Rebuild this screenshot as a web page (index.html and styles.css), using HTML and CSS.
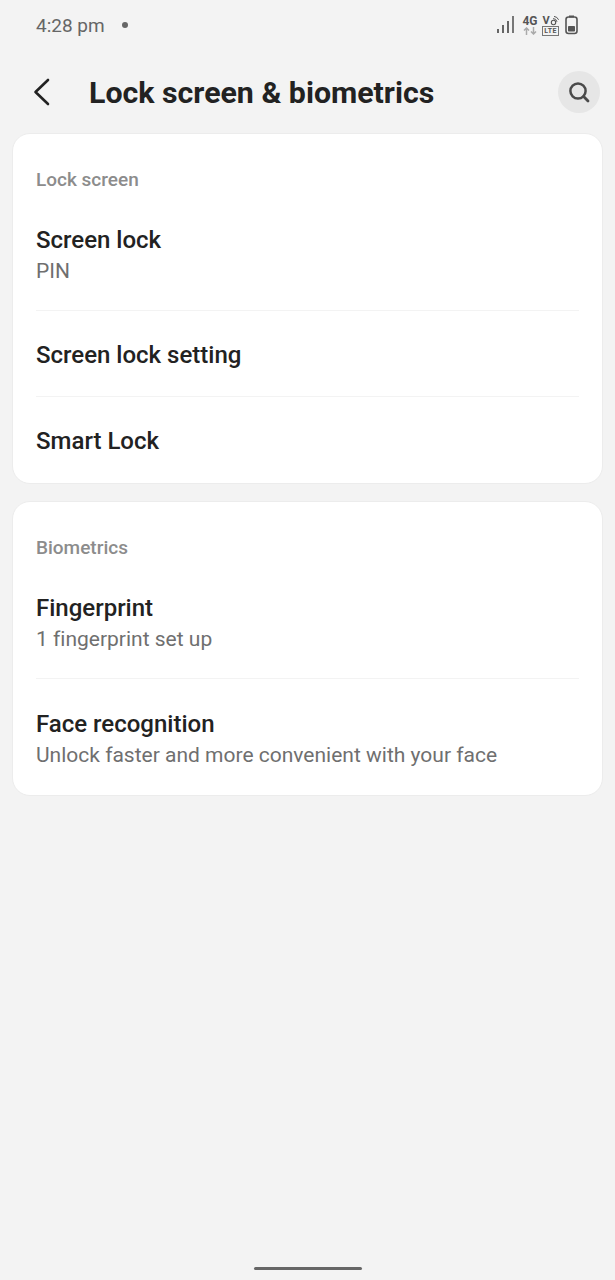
FILE: index.html
```html
<!DOCTYPE html>
<html lang="en">
<head>
  <meta charset="UTF-8">
  <meta name="viewport" content="width=device-width, initial-scale=1.0">
  <title>Lock screen &amp; biometrics</title>
  <link rel="stylesheet" href="styles.css">
</head>
<body>
  <div class="statusbar">
    <div class="status-left">
      <span class="clock">4:28 pm</span>
      <span class="dot"></span>
    </div>
    <div class="status-right">
      <svg class="signal" width="20" height="20" viewBox="0 0 20 20">
        <rect x="1" y="14" width="2" height="4" fill="#666"/>
        <rect x="6" y="10" width="2" height="8" fill="#666"/>
        <rect x="11" y="6" width="2" height="12" fill="#666"/>
        <rect x="16" y="1" width="2" height="17" fill="#777"/>
      </svg>
      <div class="net">
        <span class="net-label">4G</span>
        <svg width="14" height="8" viewBox="0 0 14 8">
          <path d="M3.5 8V1.5M1 3.5l2.5-2.5 2.5 2.5" fill="none" stroke="#aaa" stroke-width="1.5"/>
          <path d="M10.5 0v6.5M8 4.5l2.5 2.5 2.5-2.5" fill="none" stroke="#aaa" stroke-width="1.5"/>
        </svg>
      </div>
      <div class="volte">
        <div class="volte-top">
          <span class="volte-v">V</span>
          <svg width="9" height="11" viewBox="0 0 9 11">
            <circle cx="3.5" cy="7.5" r="2.2" fill="none" stroke="#555" stroke-width="1.1"/>
            <path d="M3 3.6a4 4 0 0 1 4 3.2M4 1.4a5.6 5.6 0 0 1 4.6 3.4" fill="none" stroke="#555" stroke-width="1"/>
          </svg>
        </div>
        <span class="volte-lte">LTE</span>
      </div>
      <svg class="battery" width="13" height="20" viewBox="0 0 13 20">
        <rect x="4" y="0.5" width="5" height="2" fill="#555"/>
        <rect x="1" y="2" width="11" height="16.5" rx="2.5" fill="none" stroke="#555" stroke-width="1.6"/>
        <rect x="3" y="11" width="7" height="5.5" rx="0.8" fill="#555"/>
      </svg>
    </div>
  </div>

  <header class="appbar">
    <button class="back-btn" aria-label="Back">
      <svg width="18" height="28" viewBox="0 0 18 28">
        <path d="M16 2 3.5 14 16 26" fill="none" stroke="#222" stroke-width="2.6" stroke-linecap="round" stroke-linejoin="round"/>
      </svg>
    </button>
    <h1 class="title">Lock screen &amp; biometrics</h1>
    <button class="search-btn" aria-label="Search">
      <svg width="24" height="24" viewBox="0 0 24 24">
        <circle cx="11" cy="11" r="7.6" fill="none" stroke="#4a4a4a" stroke-width="2.5"/>
        <path d="M16.6 16.6 21 21" fill="none" stroke="#4a4a4a" stroke-width="2.8" stroke-linecap="round"/>
      </svg>
    </button>
  </header>

  <main class="content">
    <section class="card">
      <h2 class="card-label">Lock screen</h2>
      <div class="row row-two">
        <div class="row-title">Screen lock</div>
        <div class="row-sub">PIN</div>
      </div>
      <div class="row">
        <div class="row-title">Screen lock setting</div>
      </div>
      <div class="row">
        <div class="row-title">Smart Lock</div>
      </div>
    </section>

    <section class="card">
      <h2 class="card-label">Biometrics</h2>
      <div class="row row-two">
        <div class="row-title">Fingerprint</div>
        <div class="row-sub">1 fingerprint set up</div>
      </div>
      <div class="row row-two">
        <div class="row-title">Face recognition</div>
        <div class="row-sub">Unlock faster and more convenient with your face</div>
      </div>
    </section>
  </main>

  <div class="home-bar"></div>
</body>
</html>
```

FILE: styles.css
```css
* {
  box-sizing: border-box;
}
html, body {
  height: 100%;
}
body {
  margin: 0;
  height: 1280px;
  background: #f3f3f3;
  font-family: Roboto, 'Liberation Sans', sans-serif;
  color: #222;
  display: flex;
  flex-direction: column;
  overflow: hidden;
}
.statusbar {
  height: 50px;
  display: flex;
  justify-content: space-between;
  align-items: center;
  padding: 0 36px 0 36px;
}
.status-left {
  display: flex;
  align-items: center;
  gap: 17px;
}
.clock {
  font-size: 19px;
  color: #666;
}
.dot {
  width: 6px;
  height: 6px;
  border-radius: 50%;
  background: #666;
}
.status-right {
  display: flex;
  align-items: center;
  gap: 6px;
  margin-right: 1px;
}
.net {
  display: flex;
  flex-direction: column;
  align-items: center;
  width: 16px;
}
.net-label {
  font-size: 12px;
  line-height: 12px;
  font-weight: 700;
  color: #555;
}
.volte {
  display: flex;
  flex-direction: column;
  align-items: center;
  width: 17px;
  margin-left: -2px;
}
.volte-top {
  display: flex;
  align-items: flex-start;
  height: 11px;
}
.volte-v {
  font-size: 11px;
  line-height: 11px;
  font-weight: 700;
  color: #555;
}
.volte-lte {
  width: 100%;
  text-align: center;
  font-size: 7px;
  line-height: 8px;
  font-weight: 700;
  letter-spacing: 0.4px;
  color: #555;
  border: 1px solid #777;
}
.appbar {
  height: 83px;
  display: flex;
  align-items: center;
  padding: 0 15px 0 31px;
}
.back-btn, .search-btn {
  border: none;
  background: none;
  padding: 0;
  display: flex;
  align-items: center;
  justify-content: center;
}
.back-btn {
  width: 20px;
  height: 32px;
}
.title {
  flex: 1;
  margin: 2px 0 0 38px;
  font-size: 30.3px;
  font-weight: 700;
  color: #222;
}
.search-btn {
  width: 42px;
  height: 42px;
  border-radius: 50%;
  background: #e6e6e6;
}
.content {
  display: flex;
  flex-direction: column;
  gap: 17px;
  padding: 0 12px;
}
.card {
  background: #fff;
  border: 1px solid #ececec;
  border-radius: 18px;
  padding: 0 23px 1px;
}
.card-label {
  margin: 0;
  height: 60px;
  padding-top: 33px;
  font-size: 19px;
  line-height: 26px;
  font-weight: 500;
  color: #8c8c8c;
}
.row {
  height: 86px;
  display: flex;
  flex-direction: column;
  justify-content: center;
  padding-top: 2px;
  border-top: 1px solid #f3f3f3;
}
.card-label + .row {
  border-top: none;
  padding-top: 6px;
}
.row-two {
  height: 116px;
}
.row-two + .row-two {
  padding-top: 6px;
}
.row-title {
  font-size: 24px;
  line-height: 30px;
  font-weight: 500;
  color: #222;
}
.row-sub {
  font-size: 21px;
  line-height: 30px;
  margin-top: 1px;
  color: #6f6f6f;
  font-variant-ligatures: none;
}
.home-bar {
  width: 108px;
  height: 3px;
  border-radius: 2px;
  background: #666;
  margin: auto auto 10px;
}
```
